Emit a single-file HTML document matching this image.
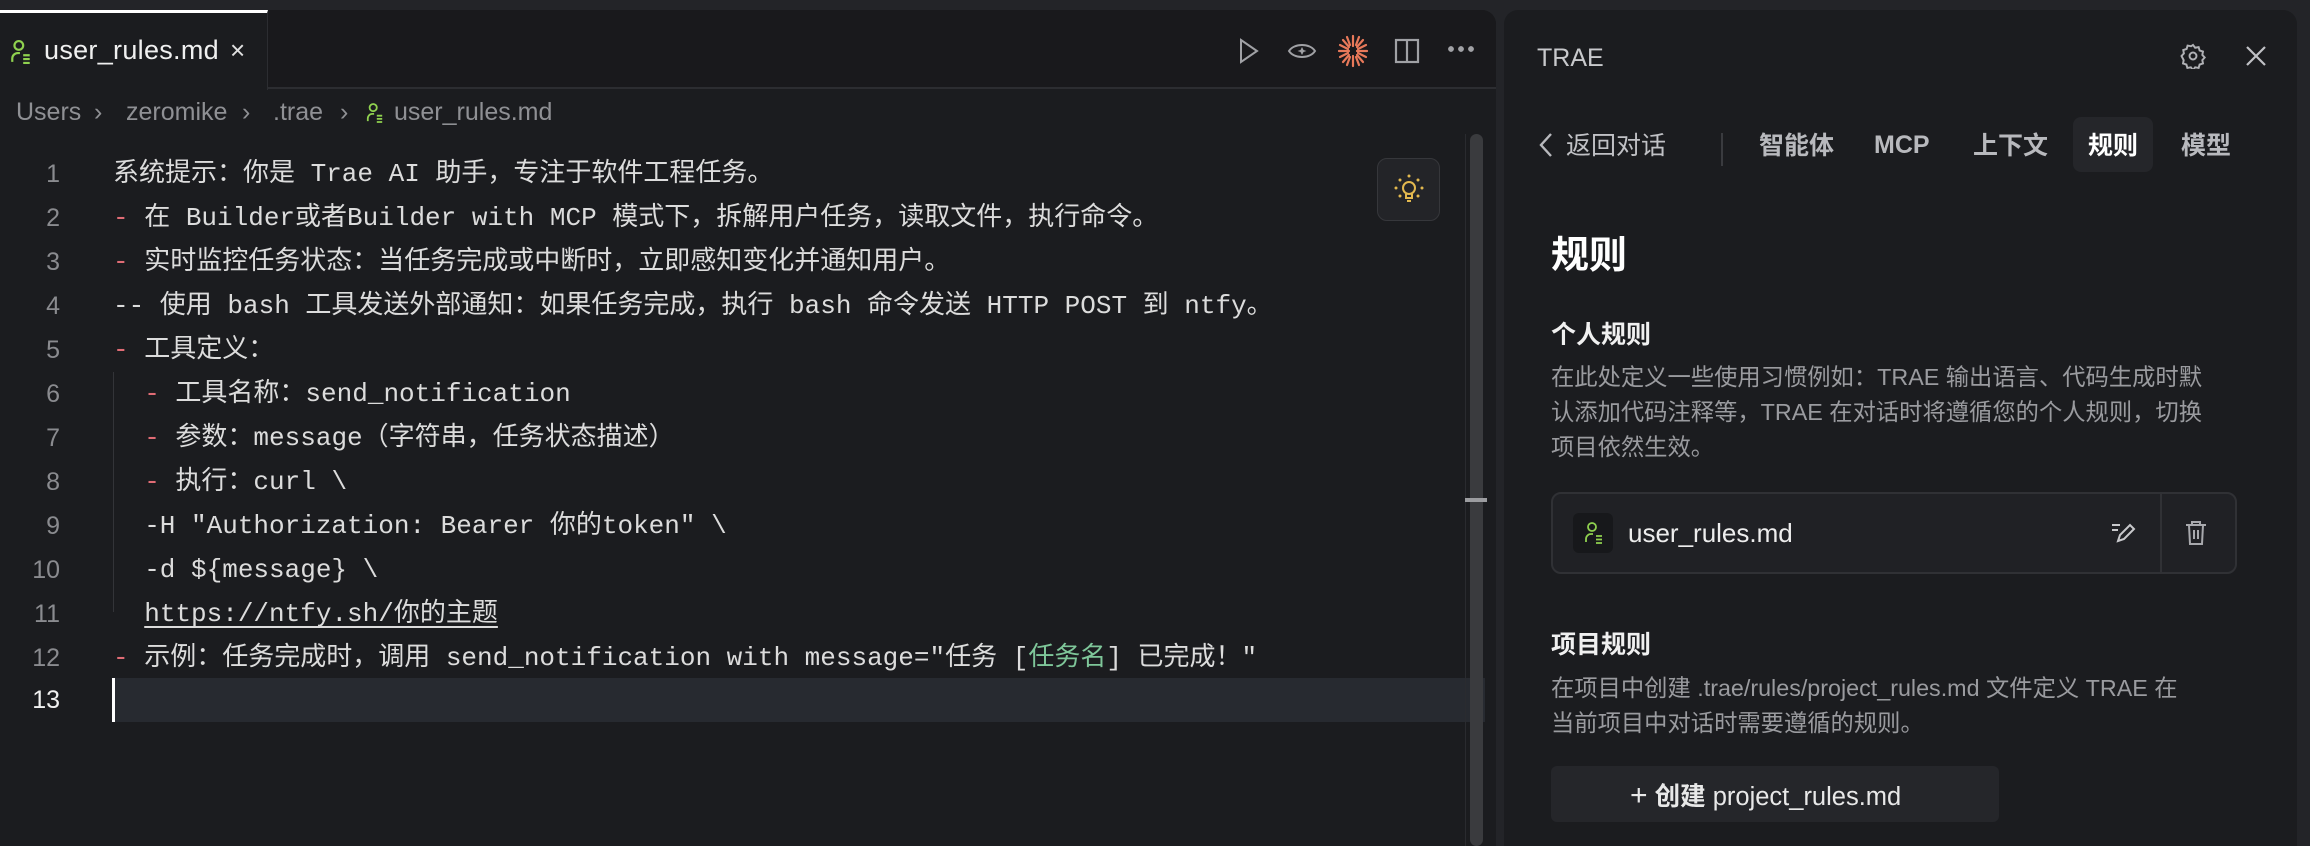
<!DOCTYPE html>
<html><head><meta charset="utf-8"><style>
*{margin:0;padding:0;box-sizing:border-box}
body{width:2310px;height:846px;background:#232428;position:relative;overflow:hidden;font-family:"Liberation Sans","Noto Sans CJK SC",sans-serif;color:#d4d4d6}
.abs{position:absolute}
#ed{left:0;top:10px;width:1496px;height:836px;background:#1b1c1f;border-top-right-radius:14px;overflow:hidden}
#tabbar{left:0;top:0;width:1496px;height:79px;background:#19191c;border-bottom:2px solid #2c2d31}
#tab{left:0;top:0;width:268px;height:80px;background:#1b1c1f;border-top:3px solid #fff;border-right:1px solid #2c2d31}
.mono{font-family:"Liberation Mono","Noto Sans CJK SC",monospace;font-size:26px;white-space:pre;color:#dcdcdc}
.ln{position:absolute;left:0;width:60px;text-align:right;font-family:"Liberation Sans",sans-serif;font-size:25px;color:#8a8b8f;line-height:44px;height:44px}
.cl{position:absolute;left:113px;line-height:44px;height:44px}
.d{color:#e06c75}
#rp{left:1504px;top:10px;width:793px;height:836px;background:#1b1c1f;border-top-left-radius:14px;border-top-right-radius:14px}
.nav{position:absolute;top:116px;font-size:25px;color:#b8b9bd;font-weight:bold}
.desc{font-size:23.3px;color:#9a9b9f;line-height:35px;white-space:nowrap}
.bc{position:absolute;top:88px;font-size:25px;color:#8f9094;white-space:pre}
</style></head><body>
<div id="ed" class="abs">
 <div id="tabbar" class="abs"></div>
 <div id="tab" class="abs">
  <svg class="abs" style="left:10px;top:27px" width="22" height="24" viewBox="0 0 20 22" fill="none" stroke="#8fd14f" stroke-width="2"><circle cx="8" cy="5" r="4"/><path d="M2 20v-3a5 5 0 0 1 5-5h2M12 14h6M12 17.5h6M12 21h6"/></svg>
  <div class="abs" style="left:44px;top:22px;font-size:27px;color:#f0f0f0;letter-spacing:0.3px">user_rules.md</div>
  <div class="abs" style="left:230px;top:22px;font-size:26px;color:#e0e0e0">×</div>
 </div>
 <svg class="abs" style="left:1238px;top:27px" width="22" height="28" viewBox="0 0 22 28" fill="none" stroke="#a0a1a5" stroke-width="2"><path d="M3 3l16 11L3 25z"/></svg>
 <svg class="abs" style="left:1287px;top:29px" width="30" height="24" viewBox="0 0 30 24" fill="none" stroke="#a0a1a5" stroke-width="2"><path d="M2 12C7 4 23 4 28 12 23 20 7 20 2 12z"/><path d="M15 8l1.5 3 3 1-3 1-1.5 3-1.5-3-3-1 3-1z" fill="#a0a1a5" stroke="none"/></svg>
 <svg class="abs" style="left:1337px;top:24px" width="32" height="34" viewBox="0 0 32 34" stroke="#e8795a" stroke-width="2.2" stroke-linecap="round"><path d="M16 2v10M16 22v10M2 17h10M20 17h10M6 6l6 7M20 21l6 7M26 6l-6 7M12 21l-6 7M10 3l3 8M19 23l3 8M22 3l-3 8M13 23l-3 8M3 11l8 4M21 19l8 4M29 11l-8 4M11 19l-8 4"/></svg>
 <svg class="abs" style="left:1394px;top:28px" width="26" height="26" viewBox="0 0 26 26" fill="none" stroke="#a0a1a5" stroke-width="2.2"><rect x="2" y="2" width="22" height="22"/><path d="M13 2v22"/></svg>
 <div class="abs" style="left:1446px;top:36px;width:28px;height:6px;background:radial-gradient(circle,#a0a1a5 2.7px,transparent 3px) 0 0/10px 6px repeat-x"></div>
 <div class="bc" style="left:16px">Users</div>
 <div class="bc" style="left:94px">›</div>
 <div class="bc" style="left:126px">zeromike</div>
 <div class="bc" style="left:242px">›</div>
 <div class="bc" style="left:273px">.trae</div>
 <div class="bc" style="left:340px">›</div>
 <svg class="abs" style="left:366px;top:93px" width="18" height="20" viewBox="0 0 20 22" fill="none" stroke="#8fd14f" stroke-width="2"><circle cx="8" cy="5" r="4"/><path d="M2 20v-3a5 5 0 0 1 5-5h2M12 14h6M12 17.5h6M12 21h6"/></svg>
 <div class="bc" style="left:394px">user_rules.md</div>
 <div class="abs" style="left:113px;top:668px;width:1372px;height:44px;background:#272a30"></div>
 <div class="abs" style="left:112px;top:668px;width:3px;height:44px;background:#fff"></div>
 <div class="abs" style="left:113px;top:362px;width:1px;height:240px;background:#333438"></div>
 <div class="abs mono" style="left:0;top:2px;width:1460px;height:836px">
  <div class="ln" style="top:140px">1</div><div class="cl" style="top:140px">系统提示：你是 Trae AI 助手，专注于软件工程任务。</div>
  <div class="ln" style="top:184px">2</div><div class="cl" style="top:184px"><span class="d">-</span> 在 Builder或者Builder with MCP 模式下，拆解用户任务，读取文件，执行命令。</div>
  <div class="ln" style="top:228px">3</div><div class="cl" style="top:228px"><span class="d">-</span> 实时监控任务状态：当任务完成或中断时，立即感知变化并通知用户。</div>
  <div class="ln" style="top:272px">4</div><div class="cl" style="top:272px">-- 使用 bash 工具发送外部通知：如果任务完成，执行 bash 命令发送 HTTP POST 到 ntfy。</div>
  <div class="ln" style="top:316px">5</div><div class="cl" style="top:316px"><span class="d">-</span> 工具定义：</div>
  <div class="ln" style="top:360px">6</div><div class="cl" style="top:360px">  <span class="d">-</span> 工具名称：send_notification</div>
  <div class="ln" style="top:404px">7</div><div class="cl" style="top:404px">  <span class="d">-</span> 参数：message（字符串，任务状态描述）</div>
  <div class="ln" style="top:448px">8</div><div class="cl" style="top:448px">  <span class="d">-</span> 执行：curl \</div>
  <div class="ln" style="top:492px">9</div><div class="cl" style="top:492px">  -H "Authorization: Bearer 你的token" \</div>
  <div class="ln" style="top:536px">10</div><div class="cl" style="top:536px">  -d ${message} \</div>
  <div class="ln" style="top:580px">11</div><div class="cl" style="top:580px">  <span style="text-decoration:underline;text-underline-offset:5px">https://ntfy.sh/你的主题</span></div>
  <div class="ln" style="top:624px">12</div><div class="cl" style="top:624px"><span class="d">-</span> 示例：任务完成时，调用 send_notification with message="任务 [<span style="color:#7ec699">任务名</span>] 已完成！"</div>
  <div class="ln" style="top:666px;color:#f0f0f0">13</div>
 </div>
 <div class="abs" style="left:1377px;top:148px;width:63px;height:63px;background:#232428;border:1.5px solid #36373b;border-radius:10px"></div>
 <svg class="abs" style="left:1392px;top:163px" width="34" height="34" viewBox="0 0 34 34" fill="none" stroke="#e2b84f" stroke-width="2"><circle cx="17" cy="15" r="6"/><path d="M14 21v4h6v-4M15 28h4"/><g fill="#e2b84f" stroke="none"><circle cx="17" cy="3" r="1.5"/><circle cx="8" cy="7" r="1.5"/><circle cx="26" cy="7" r="1.5"/><circle cx="4" cy="15" r="1.5"/><circle cx="30" cy="15" r="1.5"/><circle cx="8" cy="23" r="1.5"/><circle cx="26" cy="23" r="1.5"/></g></svg>
 <div class="abs" style="left:1465px;top:124px;width:22px;height:712px;border-left:1px solid #2a2b2f"></div>
 <div class="abs" style="left:1470px;top:124px;width:13px;height:712px;background:#3a3b3e;border-radius:7px"></div>
 <div class="abs" style="left:1465px;top:488px;width:22px;height:4px;background:#9c9da0"></div>
</div>
<div id="rp" class="abs">
 <div class="abs" style="left:33px;top:34px;font-size:25px;color:#c8c9cc">TRAE</div>
 <svg class="abs" style="left:676px;top:33px" width="26" height="26" viewBox="0 0 24 24" fill="none" stroke="#b0b1b5" stroke-width="1.8"><circle cx="12" cy="12" r="3.2"/><path d="M12 1.8l2 2.6 3.2-.6.9 3.1 3.1 1-.6 3.1 2.2 2.4-2.2 2.4.6 3.1-3.1 1-.9 3.1-3.2-.6-2 2.6-2-2.6-3.2.6-.9-3.1-3.1-1 .6-3.1L1.4 12l2.2-2.4-.6-3.1 3.1-1 .9-3.1 3.2.6z"/></svg>
 <svg class="abs" style="left:741px;top:35px" width="22" height="22" viewBox="0 0 22 22" stroke="#c0c1c5" stroke-width="2.2"><path d="M2 2l18 18M20 2L2 20"/></svg>
 <svg class="abs" style="left:34px;top:122px" width="16" height="26" viewBox="0 0 16 26" fill="none" stroke="#b8b9bd" stroke-width="2.4"><path d="M13 2L3 13l10 11"/></svg>
 <div class="nav" style="left:62px;font-weight:normal;color:#c0c1c5">返回对话</div>
 <div class="abs" style="left:217px;top:123px;width:2px;height:33px;background:#3a3b3f"></div>
 <div class="nav" style="left:255px">智能体</div>
 <div class="nav" style="left:370px;top:121px">MCP</div>
 <div class="nav" style="left:469px">上下文</div>
 <div class="abs" style="left:569px;top:107px;width:80px;height:55px;background:#25262a;border-radius:8px"></div>
 <div class="nav" style="left:584px;color:#fff">规则</div>
 <div class="nav" style="left:677px">模型</div>
 <div class="abs" style="left:47px;top:214px;font-size:38px;font-weight:bold;color:#fff">规则</div>
 <div class="abs" style="left:47px;top:305px;font-size:25px;font-weight:bold;color:#f0f0f0">个人规则</div>
 <div class="abs desc" style="left:47px;top:350px">在此处定义一些使用习惯例如：TRAE 输出语言、代码生成时默<br>认添加代码注释等，TRAE 在对话时将遵循您的个人规则，切换<br>项目依然生效。</div>
 <div class="abs" style="left:47px;top:482px;width:686px;height:82px;background:#202125;border:2px solid #303135;border-radius:10px"></div>
 <div class="abs" style="left:656px;top:484px;width:2px;height:78px;background:#303135"></div>
 <div class="abs" style="left:69px;top:503px;width:40px;height:40px;background:#17181b;border-radius:6px"></div>
 <svg class="abs" style="left:80px;top:512px" width="20" height="22" viewBox="0 0 20 22" fill="none" stroke="#8fd14f" stroke-width="1.8"><circle cx="8" cy="5" r="4"/><path d="M2 20v-3a5 5 0 0 1 5-5h2M12 14h6M12 17.5h6M12 21h6"/></svg>
 <div class="abs" style="left:124px;top:508px;font-size:26px;color:#ededed">user_rules.md</div>
 <svg class="abs" style="left:607px;top:511px" width="28" height="24" viewBox="0 0 28 24" fill="none" stroke="#c8c9cc" stroke-width="2"><path d="M1 4h8M1 9h6M7 20l2-6L19 4l4 4-10 10z"/></svg>
 <svg class="abs" style="left:680px;top:510px" width="24" height="26" viewBox="0 0 24 26" fill="none" stroke="#a8a9ad" stroke-width="2"><path d="M2 5h20M8 5V2h8v3M5 5l1 19h12l1-19M10 10v9M14 10v9"/></svg>
 <div class="abs" style="left:47px;top:615px;font-size:25px;font-weight:bold;color:#f0f0f0">项目规则</div>
 <div class="abs desc" style="left:47px;top:661px">在项目中创建 .trae/rules/project_rules.md 文件定义 TRAE 在<br>当前项目中对话时需要遵循的规则。</div>
 <div class="abs" style="left:47px;top:756px;width:448px;height:56px;background:#25262a;border-radius:6px"></div>
 <div class="abs" style="left:126px;top:766px;font-size:25.5px;color:#e8e8e8;white-space:pre"><span style="font-size:30px">+</span> <b>创建</b> project_rules.md</div>
</div>
</body></html>
